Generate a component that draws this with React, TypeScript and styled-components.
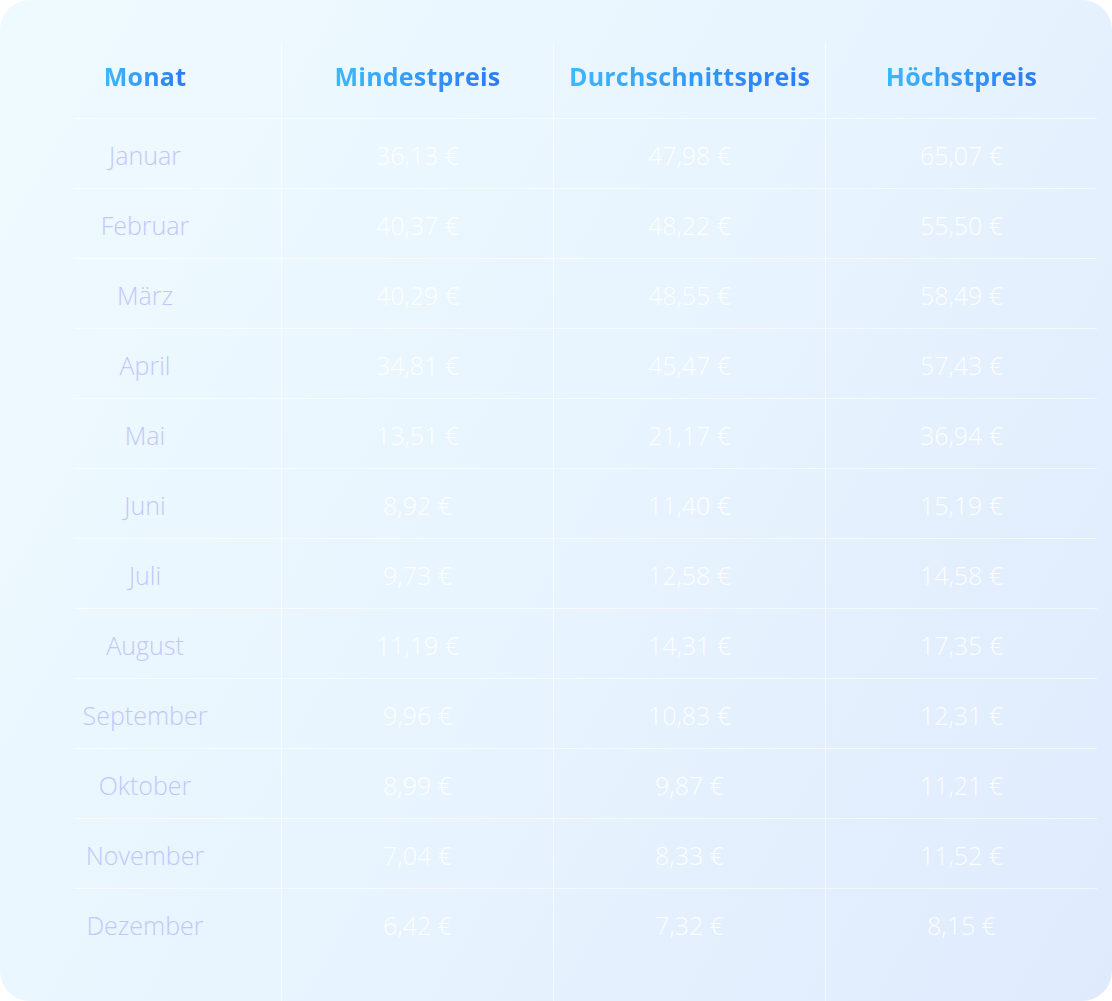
import React from "react";
import styled, { createGlobalStyle } from "styled-components";

const GlobalStyle = createGlobalStyle`
  html, body { margin: 0; padding: 0; background: #ffffff; }
  body { font-family: "Open Sans", "Noto Sans", sans-serif; }
  #root { width: 1112px; height: 1001px; }
`;

const Card = styled.div`
  box-sizing: border-box;
  width: 1112px;
  height: 1001px;
  border-radius: 30px;
  overflow: hidden;
  background: linear-gradient(120deg, #effaff 0%, #e9f5fe 45%, #dfeafd 100%);
  padding: 42px 15px 0 9px;
  display: grid;
  grid-template-columns: repeat(4, 1fr);
`;

const Column = styled.div<{ $first?: boolean }>`
  display: flex;
  flex-direction: column;
  border-left: ${(p) => (p.$first ? "none" : "1px solid rgba(255,255,255,0.55)")};
`;

const HeaderCell = styled.div<{ $first?: boolean }>`
  position: relative;
  height: 77px;
  display: flex;
  align-items: center;
  justify-content: center;
  padding-bottom: 10px;
  box-sizing: border-box;
  &::after {
    content: "";
    position: absolute;
    left: ${(p) => (p.$first ? "65px" : "0")};
    right: 0;
    bottom: 0;
    height: 1px;
    background: rgba(255, 255, 255, 0.6);
  }
`;

const HeaderText = styled.span`
  font-family: "Open Sans", "Noto Sans", sans-serif;
  font-weight: 700;
  font-size: 25px;
  letter-spacing: 0.2px;
  background: linear-gradient(90deg, #3db8fb 0%, #2a7bf4 100%);
  -webkit-background-clip: text;
  background-clip: text;
  color: transparent;
`;

const Cell = styled.div<{ $first?: boolean }>`
  position: relative;
  height: 70px;
  display: flex;
  align-items: center;
  justify-content: center;
  padding-top: 2px;
  box-sizing: border-box;
  &::after {
    content: "";
    position: absolute;
    left: ${(p) => (p.$first ? "65px" : "0")};
    right: 0;
    bottom: 0;
    height: 1px;
    background: rgba(255, 255, 255, 0.6);
  }
  &:last-child::after {
    display: none;
  }
`;

const MonthText = styled.span`
  font-family: "Open Sans", "Noto Sans", sans-serif;
  font-weight: 300;
  font-size: 25px;
  color: #c1c7fb;
`;

const ValueText = styled.span`
  font-family: "Open Sans", "Noto Sans", sans-serif;
  font-weight: 300;
  font-size: 25px;
  color: rgba(255, 255, 255, 0.95);
`;

const months = [
  "Januar", "Februar", "März", "April", "Mai", "Juni",
  "Juli", "August", "September", "Oktober", "November", "Dezember",
];

const minP = ["36,13", "40,37", "40,29", "34,81", "13,51", "8,92", "9,73", "11,19", "9,96", "8,99", "7,04", "6,42"];
const avgP = ["47,98", "48,22", "48,55", "45,47", "21,17", "11,40", "12,58", "14,31", "10,83", "9,87", "8,33", "7,32"];
const maxP = ["65,07", "55,50", "58,49", "57,43", "36,94", "15,19", "14,58", "17,35", "12,31", "11,21", "11,52", "8,15"];

const priceCols = [
  { title: "Mindestpreis", values: minP },
  { title: "Durchschnittspreis", values: avgP },
  { title: "Höchstpreis", values: maxP },
];

export default function App() {
  return (
    <>
      <GlobalStyle />
      <Card>
        <Column $first>
          <HeaderCell $first>
            <HeaderText>Monat</HeaderText>
          </HeaderCell>
          {months.map((m) => (
            <Cell key={m} $first>
              <MonthText>{m}</MonthText>
            </Cell>
          ))}
        </Column>
        {priceCols.map((c) => (
          <Column key={c.title}>
            <HeaderCell>
              <HeaderText>{c.title}</HeaderText>
            </HeaderCell>
            {c.values.map((v, i) => (
              <Cell key={i}>
                <ValueText>{v} €</ValueText>
              </Cell>
            ))}
          </Column>
        ))}
      </Card>
    </>
  );
}
